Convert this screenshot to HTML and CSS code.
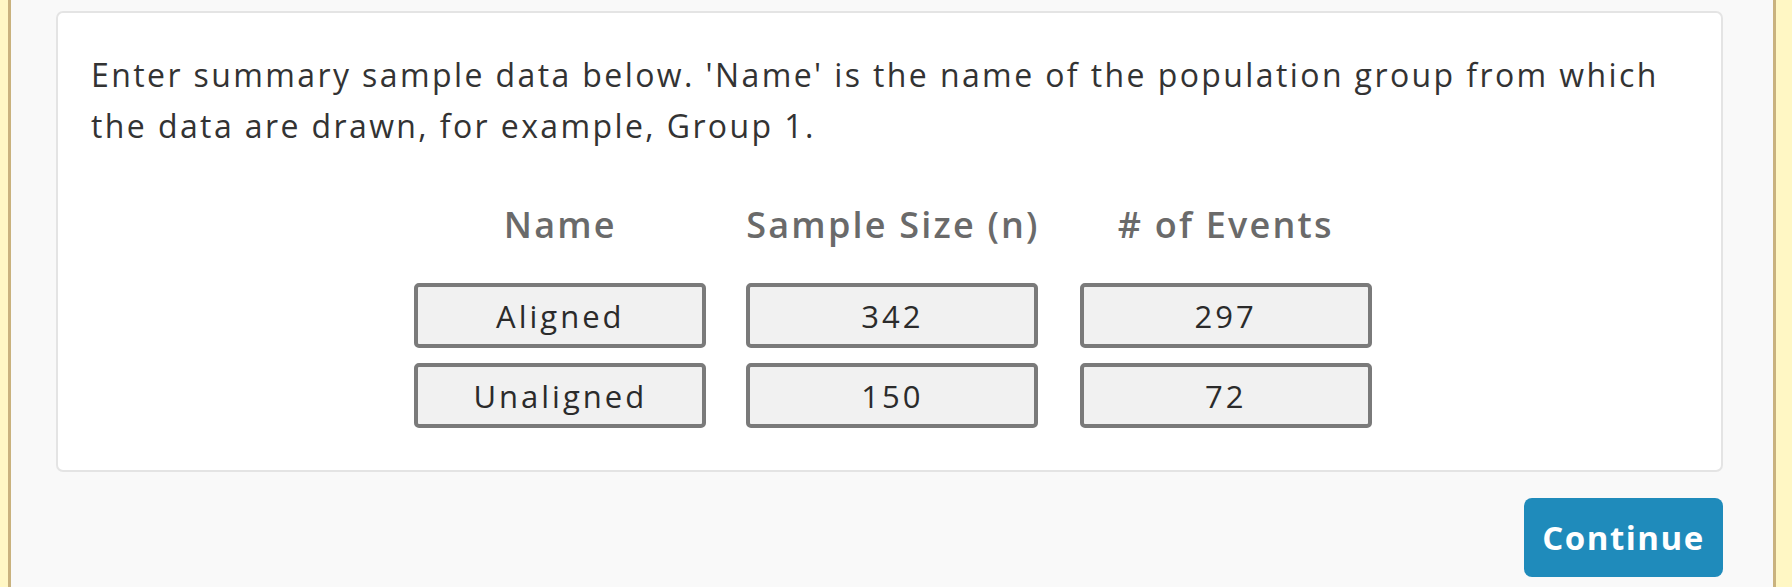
FILE: index.html
```html
<!DOCTYPE html>
<html>
<head>
<meta charset="utf-8">
<link rel="stylesheet" href="styles.css">
</head>
<body>
<div class="frame">
  <div class="panel">
    <div class="card">
      <p class="intro">Enter summary sample data below. 'Name' is the name of the population group from which the data are drawn, for example, Group 1.</p>
      <table class="data">
        <thead>
          <tr><th>Name</th><th>Sample Size (n)</th><th># of Events</th></tr>
        </thead>
        <tbody>
          <tr>
            <td><input class="cell" type="text" value="Aligned"></td>
            <td><input class="cell" type="text" value="342"></td>
            <td><input class="cell" type="text" value="297"></td>
          </tr>
          <tr>
            <td><input class="cell" type="text" value="Unaligned"></td>
            <td><input class="cell" type="text" value="150"></td>
            <td><input class="cell" type="text" value="72"></td>
          </tr>
        </tbody>
      </table>
    </div>
    <div class="actions">
      <button class="continue" type="button">Continue</button>
    </div>
  </div>
</div>
</body>
</html>
```

FILE: styles.css
```css
html, body {
  margin: 0;
  padding: 0;
  height: 100%;
  overflow: hidden;
}
body {
  background: #f9f9f9;
  font-family: "Open Sans", "Liberation Sans", sans-serif;
}
.frame {
  height: 587px;
  display: flex;
  border-left: 8px solid #fff7c4;
  border-right: 16px solid #fff7c4;
  box-sizing: border-box;
}
.panel {
  flex: 1;
  border-left: 3px solid #c9b27e;
  border-right: 3px solid #c9b27e;
  padding: 11px 50px 0 45px;
}
.card {
  background: #fff;
  border: 2px solid #e4e4e4;
  border-radius: 7px;
  height: 461px;
  box-sizing: border-box;
  padding: 36px 26px 0 33px;
}
.intro {
  margin: 0;
  font-size: 32px;
  line-height: 51px;
  letter-spacing: 2.4px;
  color: #333;
}
.data {
  margin: 50px auto 0;
  border-collapse: separate;
  border-spacing: 0;
}
.data th {
  font-size: 36px;
  font-weight: 600;
  letter-spacing: 2.2px;
  color: #6a6a6a;
  padding: 0 20px 34px;
  line-height: 48px;
}
.data td {
  padding: 0 20px 15px;
}
.cell {
  display: block;
  width: 292px;
  height: 65px;
  box-sizing: border-box;
  border: 4px solid #7a7a7a;
  border-radius: 5px;
  background: #f1f1f1;
  font-family: "Open Sans", "Liberation Sans", sans-serif;
  font-size: 31px;
  letter-spacing: 3px;
  color: #2b2b2b;
  text-align: center;
  padding: 0;
}
.actions {
  display: flex;
  justify-content: flex-end;
  padding-top: 26px;
}
.continue {
  width: 199px;
  height: 79px;
  background: #1f8bbb;
  color: #fff;
  border: none;
  border-radius: 8px;
  font-family: "Open Sans", "Liberation Sans", sans-serif;
  font-weight: 700;
  font-size: 33px;
  letter-spacing: 1.5px;
  padding: 0;
}
```
